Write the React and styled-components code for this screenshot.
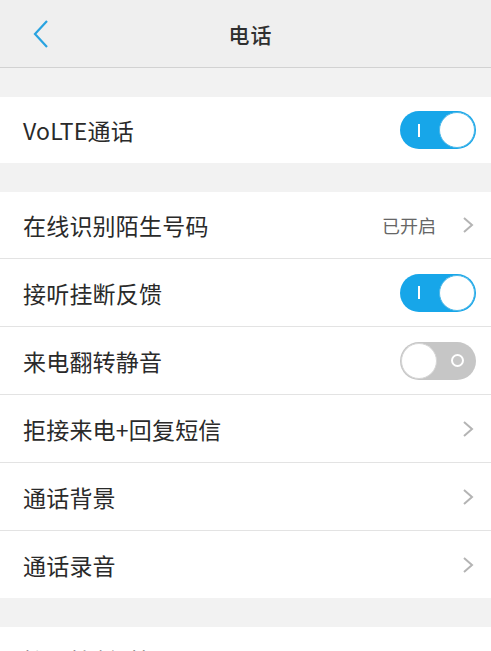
import React from "react";
import styled, { createGlobalStyle } from "styled-components";

const Global = createGlobalStyle`
  html, body { margin: 0; padding: 0; background: #f2f2f2; }
  body { font-family: "Noto Sans CJK SC", "Noto Sans", sans-serif; -webkit-font-smoothing: antialiased; }
`;

const Page = styled.div`
  width: 491px;
  height: 651px;
  overflow: hidden;
  background: #f2f2f2;
  display: flex;
  flex-direction: column;
`;

const Header = styled.header`
  height: 67px;
  flex: none;
  background: #efefef;
  border-bottom: 1px solid #d2d2d2;
  display: grid;
  grid-template-columns: 90px 1fr 80px;
  align-items: center;
`;

const Back = styled.button`
  border: 0;
  background: none;
  padding: 0 0 0 33px;
  display: flex;
  align-items: center;
  height: 100%;
`;

const Title = styled.h1`
  margin: 0;
  text-align: center;
  font-size: 21px;
  font-weight: 500;
  color: #2f2f2f;
  letter-spacing: 1px;
`;

const Gap = styled.div`
  height: ${(p) => p.h}px;
  flex: none;
`;

const Group = styled.section`
  background: #fff;
  display: flex;
  flex-direction: column;
  flex: none;
`;

const Row = styled.div`
  height: 66px;
  flex: none;
  display: flex;
  align-items: center;
  padding: 0 15px 0 23px;
  & + & {
    height: 68px;
    box-sizing: border-box;
    border-top: 1px solid #e3e3e3;
  }
`;

const Label = styled.span`
  flex: 1;
  font-size: 23px;
  color: #2a2a2a;
  letter-spacing: 0.2px;
`;

const Value = styled.span`
  font-size: 18px;
  color: #666;
  margin-right: 26px;
`;

const Track = styled.div`
  width: 76px;
  height: 38px;
  border-radius: 19px;
  background: ${(p) => (p.on ? "#17a6e9" : "#c6c6c6")};
  display: flex;
  align-items: center;
  flex-direction: ${(p) => (p.on ? "row" : "row-reverse")};
  justify-content: space-between;
  box-sizing: border-box;
  padding: 0 1px;
`;

const Knob = styled.div`
  width: 36px;
  height: 36px;
  border-radius: 50%;
  background: #fff;
  box-sizing: border-box;
  border: 1.5px solid ${(p) => (p.on ? "#4fb8e8" : "#d6d6d6")};
`;

const Mark = styled.div`
  width: 36px;
  display: flex;
  justify-content: center;
  align-items: center;
`;

const OnBar = styled.div`
  width: 2px;
  height: 13px;
  background: #fff;
`;

const OffRing = styled.div`
  width: 9px;
  height: 9px;
  border-radius: 50%;
  border: 2px solid #fff;
`;

const Switch = ({ on }) => (
  <Track on={on ? 1 : 0}>
    <Mark>{on ? <OnBar /> : <OffRing />}</Mark>
    <Knob on={on ? 1 : 0} />
  </Track>
);

const Chevron = () => (
  <svg width="12" height="18" viewBox="0 0 12 18" style={{ marginRight: 2 }}>
    <path d="M2 2 L10 9 L2 16" fill="none" stroke="#b4b4b4" strokeWidth="2" />
  </svg>
);

export default function App() {
  return (
    <Page>
      <Global />
      <Header>
        <Back aria-label="返回">
          <svg width="16" height="30" viewBox="0 0 16 30">
            <path d="M14 2 L2 15 L14 28" fill="none" stroke="#29a3e0" strokeWidth="2.2" />
          </svg>
        </Back>
        <Title>电话</Title>
        <div />
      </Header>
      <Gap h={29} />
      <Group>
        <Row>
          <Label>VoLTE通话</Label>
          <Switch on />
        </Row>
      </Group>
      <Gap h={29} />
      <Group>
        <Row>
          <Label>在线识别陌生号码</Label>
          <Value>已开启</Value>
          <Chevron />
        </Row>
        <Row>
          <Label>接听挂断反馈</Label>
          <Switch on />
        </Row>
        <Row>
          <Label>来电翻转静音</Label>
          <Switch />
        </Row>
        <Row>
          <Label>拒接来电+回复短信</Label>
          <Chevron />
        </Row>
        <Row>
          <Label>通话背景</Label>
          <Chevron />
        </Row>
        <Row>
          <Label>通话录音</Label>
          <Chevron />
        </Row>
      </Group>
      <Gap h={29} />
      <Group>
        <Row>
          <Label>接通挂断时振动</Label>
          <Chevron />
        </Row>
      </Group>
    </Page>
  );
}
